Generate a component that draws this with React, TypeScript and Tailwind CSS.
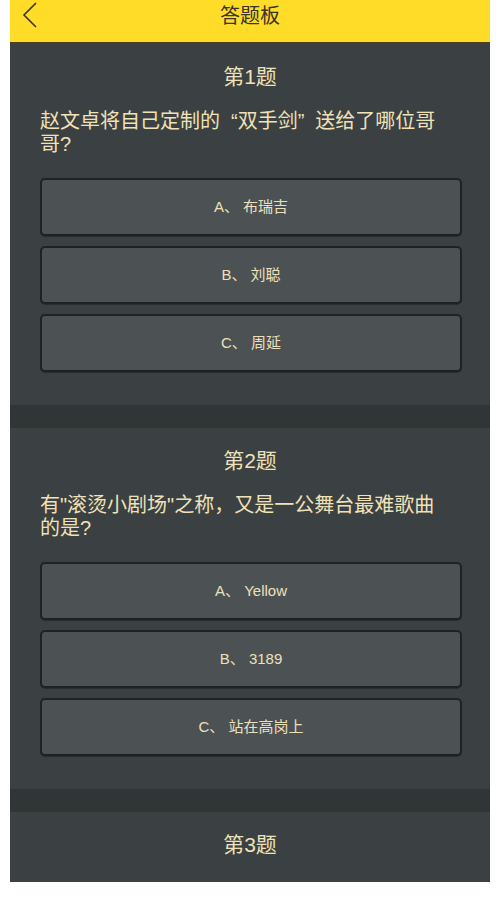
import React from 'react';

type Question = {
  no: number;
  lines: React.ReactNode[];
  options: string[];
};

const questions: Question[] = [
  {
    no: 1,
    lines: [
      <>
        赵文卓将自己定制的<span className="ml-[11px]">“</span>双手剑<span className="mr-[11px]">”</span>送给了哪位哥
      </>,
      '哥?',
    ],
    options: ['A、 布瑞吉', 'B、 刘聪', 'C、 周延'],
  },
  {
    no: 2,
    lines: ['有"滚烫小剧场"之称，又是一公舞台最难歌曲', '的是?'],
    options: ['A、 Yellow', 'B、 3189', 'C、 站在高岗上'],
  },
  {
    no: 3,
    lines: [],
    options: [],
  },
];

function QuestionCard({ q }: { q: Question }) {
  return (
    <section className="bg-[#3b4042] pt-[21px] pb-[33px]">
      <h2 className="text-center text-[21px] leading-[24px] text-[#f0e2b8]">第{q.no}题</h2>
      {q.lines.length > 0 && (
        <p lang="zh-CN" className="mt-[21px] pl-[30px] text-[20px] leading-[23px] text-[#f0e2b8]">
          {q.lines.map((line, i) => (
            <span key={i} className="block whitespace-nowrap">
              {line}
            </span>
          ))}
        </p>
      )}
      {q.options.length > 0 && (
        <div className="mt-[22px] ml-[30px] flex w-[422px] flex-col gap-[10px]">
          {q.options.map((opt) => (
            <button
              key={opt}
              className="flex h-[58px] items-center justify-center rounded-[5px] border-2 border-[#1f2223] bg-[#4c5153] text-[15px] text-[#ece0bc] shadow-[0_1px_0_#2a2d2e]"
            >
              {opt}
            </button>
          ))}
        </div>
      )}
    </section>
  );
}

export default function App() {
  return (
    <div
      className="min-h-[902px] bg-white px-[10px]"
      style={{ fontFamily: '"Liberation Sans", "Noto Sans CJK SC", sans-serif' }}
    >
      <div className="h-[882px] overflow-hidden bg-[#3b4042]">
        <header className="relative flex h-[44px] items-center justify-center border-b-2 border-[#4d4217] bg-[#fedc27]">
          <button className="absolute left-[11px] top-[2px] h-[26px] w-[18px]">
            <svg viewBox="0 0 18 26" className="h-[26px] w-[18px]" fill="none" stroke="#3a3326" strokeWidth="1.6">
              <path d="M15 1 L3 13 L15 25" />
            </svg>
          </button>
          <h1 className="-mt-[10px] text-[20px] text-[#3a3326]">答题板</h1>
        </header>
        {questions.map((q, i) => (
          <React.Fragment key={q.no}>
            {i > 0 && <div className="h-[23px] bg-[#313536]" />}
            <QuestionCard q={q} />
          </React.Fragment>
        ))}
      </div>
    </div>
  );
}
